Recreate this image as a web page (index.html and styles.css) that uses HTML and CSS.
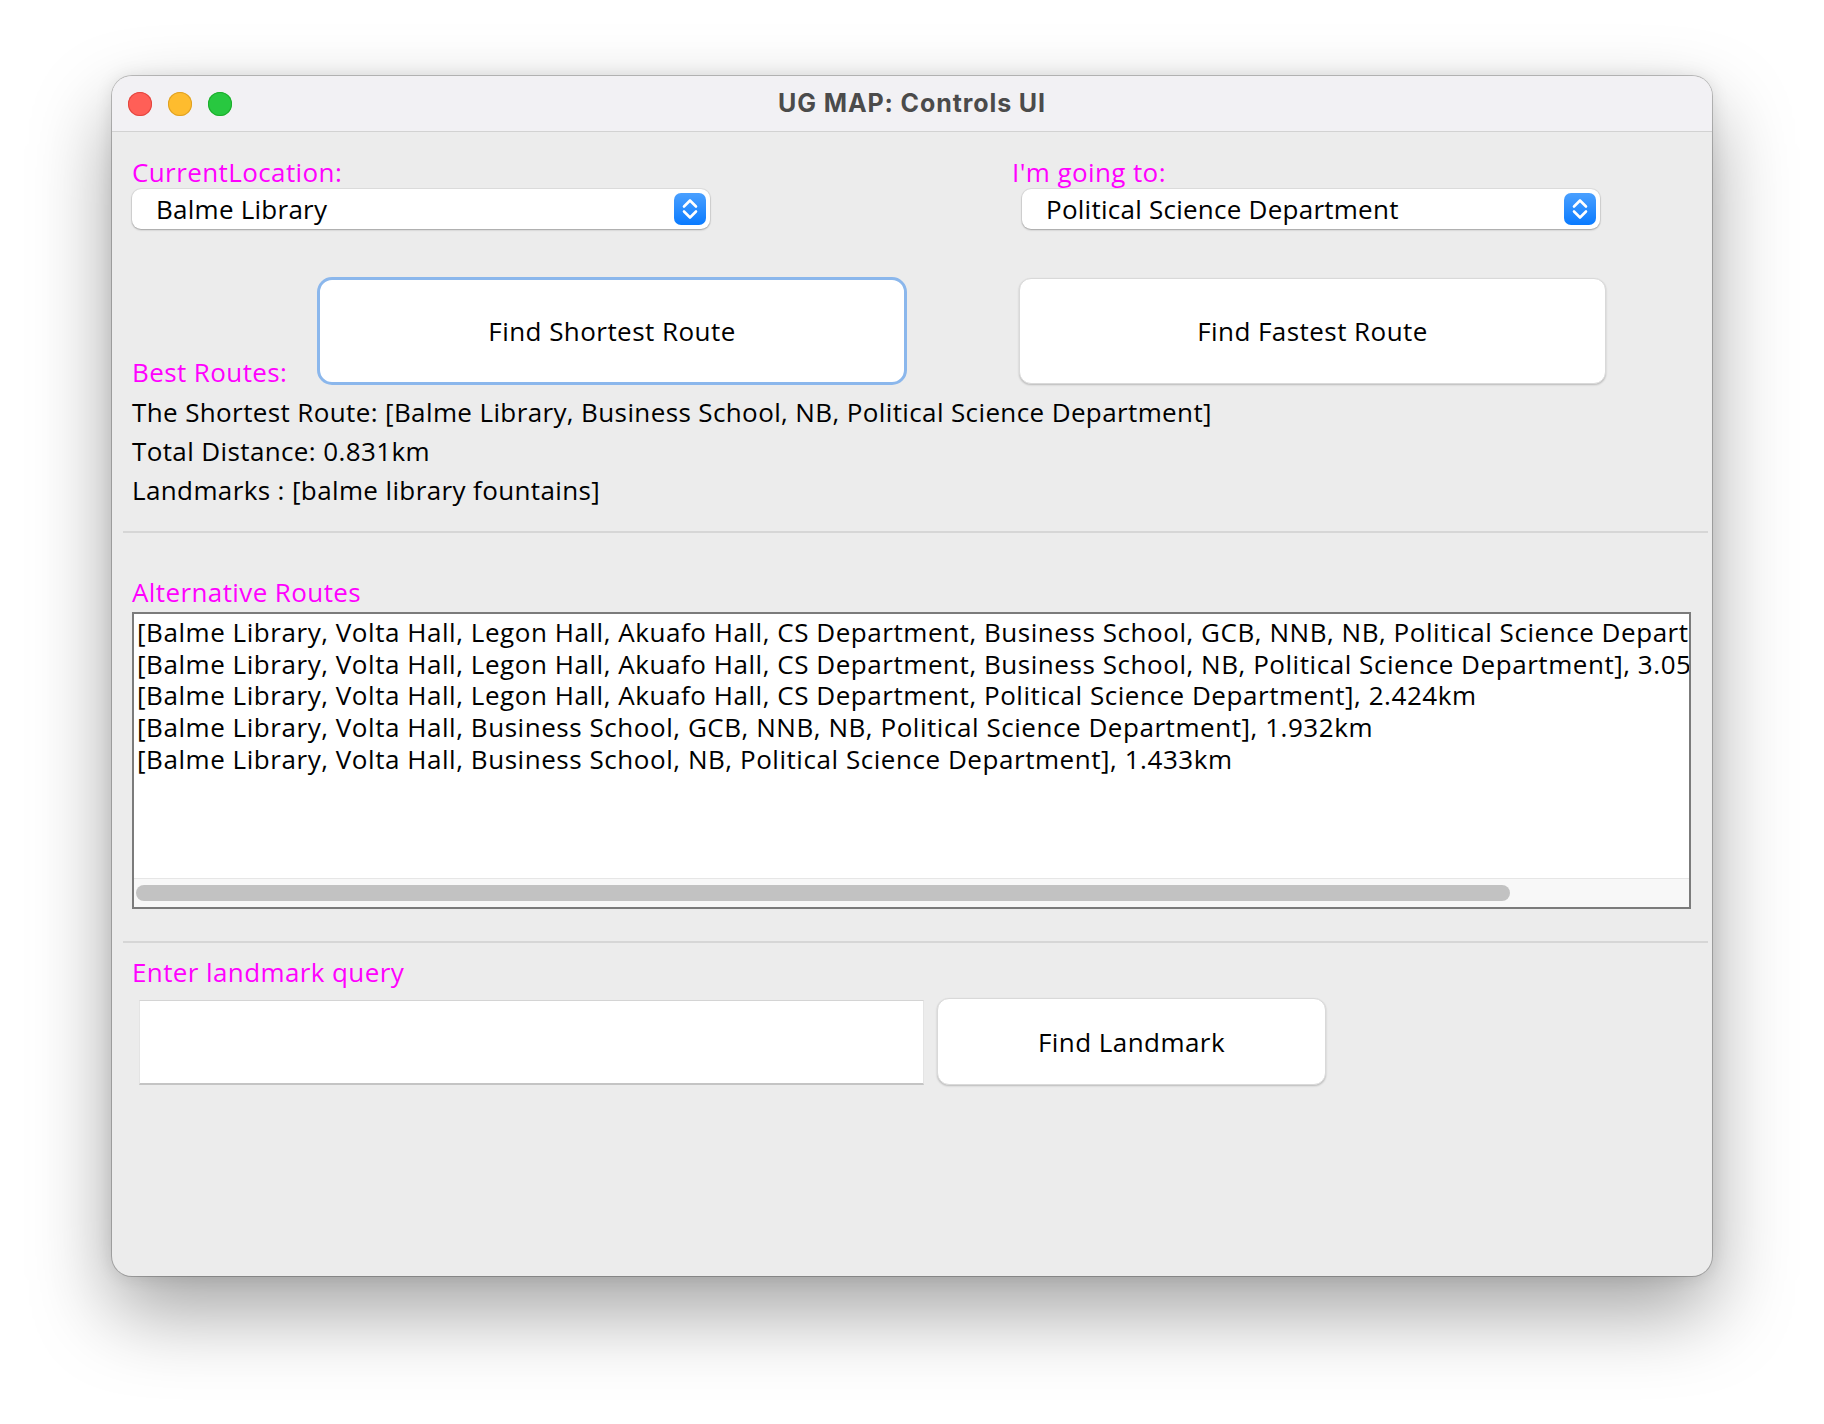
FILE: index.html
```
<!DOCTYPE html>
<html lang="en">
<head>
<meta charset="utf-8">
<title>UG MAP: Controls UI</title>
<link rel="stylesheet" href="styles.css">
</head>
<body>
<div class="screen">
  <div class="window">
    <div class="titlebar">
      <div class="lights">
        <span class="light red"></span>
        <span class="light yellow"></span>
        <span class="light green"></span>
      </div>
      <div class="title">UG MAP: Controls UI</div>
      <div class="titlebar-spacer"></div>
    </div>
    <div class="content">
      <div class="pickers">
        <div class="picker picker-from">
          <div class="label">CurrentLocation:</div>
          <div class="combo">
            <span class="combo-text">Balme Library</span>
            <svg class="stepper" width="32" height="32" viewBox="0 0 32 32">
              <defs>
                <linearGradient id="sg1" x1="0" y1="0" x2="0" y2="1">
                  <stop offset="0" stop-color="#4aa0ff"/>
                  <stop offset="1" stop-color="#0a7bff"/>
                </linearGradient>
              </defs>
              <rect x="0" y="0" width="32" height="32" rx="7" fill="url(#sg1)"/>
              <path d="M10 13.5 L16 7.5 L22 13.5" fill="none" stroke="#fff" stroke-width="2.6" stroke-linecap="round" stroke-linejoin="round"/>
              <path d="M10 18.5 L16 24.5 L22 18.5" fill="none" stroke="#fff" stroke-width="2.6" stroke-linecap="round" stroke-linejoin="round"/>
            </svg>
          </div>
        </div>
        <div class="picker picker-to">
          <div class="label">I'm going to:</div>
          <div class="combo">
            <span class="combo-text">Political Science Department</span>
            <svg class="stepper" width="32" height="32" viewBox="0 0 32 32">
              <defs>
                <linearGradient id="sg2" x1="0" y1="0" x2="0" y2="1">
                  <stop offset="0" stop-color="#4aa0ff"/>
                  <stop offset="1" stop-color="#0a7bff"/>
                </linearGradient>
              </defs>
              <rect x="0" y="0" width="32" height="32" rx="7" fill="url(#sg2)"/>
              <path d="M10 13.5 L16 7.5 L22 13.5" fill="none" stroke="#fff" stroke-width="2.6" stroke-linecap="round" stroke-linejoin="round"/>
              <path d="M10 18.5 L16 24.5 L22 18.5" fill="none" stroke="#fff" stroke-width="2.6" stroke-linecap="round" stroke-linejoin="round"/>
            </svg>
          </div>
        </div>
      </div>

      <div class="actions">
        <div class="label label-best">Best Routes:</div>
        <button class="btn btn-shortest">Find Shortest Route</button>
        <button class="btn btn-fastest">Find Fastest Route</button>
      </div>

      <div class="result">
        <div class="result-line">The Shortest Route: [Balme Library, Business School, NB, Political Science Department]</div>
        <div class="result-line">Total Distance: 0.831km</div>
        <div class="result-line">Landmarks : [balme library fountains]</div>
      </div>

      <div class="sep sep-1"></div>

      <div class="label label-alt">Alternative Routes</div>
      <div class="list">
        <div class="list-body">
          <div class="list-line">[Balme Library, Volta Hall, Legon Hall, Akuafo Hall, CS Department, Business School, GCB, NNB, NB, Political Science Department], 3.554km</div>
          <div class="list-line">[Balme Library, Volta Hall, Legon Hall, Akuafo Hall, CS Department, Business School, NB, Political Science Department], 3.055km</div>
          <div class="list-line">[Balme Library, Volta Hall, Legon Hall, Akuafo Hall, CS Department, Political Science Department], 2.424km</div>
          <div class="list-line">[Balme Library, Volta Hall, Business School, GCB, NNB, NB, Political Science Department], 1.932km</div>
          <div class="list-line">[Balme Library, Volta Hall, Business School, NB, Political Science Department], 1.433km</div>
        </div>
        <div class="hscroll"><div class="hscroll-thumb"></div></div>
      </div>

      <div class="sep sep-2"></div>

      <div class="label label-query">Enter landmark query</div>
      <div class="query-row">
        <div class="field"></div>
        <button class="btn btn-landmark">Find Landmark</button>
      </div>
    </div>
  </div>
</div>
</body>
</html>
```
FILE: styles.css
```
* {
  box-sizing: border-box;
}

html, body {
  margin: 0;
  padding: 0;
  background: #ffffff;
}

body {
  font-family: "Open Sans", "Liberation Sans", Arial, sans-serif;
  color: #000;
}

.screen {
  width: 1824px;
  height: 1424px;
  padding: 76px 0 0 112px;
}

.window {
  width: 1600px;
  height: 1200px;
  border-radius: 20px;
  background: #ececec;
  overflow: hidden;
  box-shadow:
    0 0 0 1px rgba(0, 0, 0, 0.22),
    0 0 18px rgba(0, 0, 0, 0.10),
    0 36px 80px rgba(0, 0, 0, 0.36);
}

/* Title bar */
.titlebar {
  height: 56px;
  background: #f2f1f4;
  border-bottom: 1px solid #d2d2d2;
  display: grid;
  grid-template-columns: 1fr auto 1fr;
  align-items: center;
}

.lights {
  display: flex;
  gap: 16px;
  padding-left: 16px;
}

.light {
  width: 24px;
  height: 24px;
  border-radius: 50%;
  display: block;
}

.light.red {
  background: #ff5f57;
  box-shadow: inset 0 0 0 1px #e2463f;
}

.light.yellow {
  background: #febc2e;
  box-shadow: inset 0 0 0 1px #dfa123;
}

.light.green {
  background: #28c840;
  box-shadow: inset 0 0 0 1px #1dad2b;
}

.title {
  font-family: Inter, "Liberation Sans", Arial, sans-serif;
  font-weight: 700;
  font-size: 25px;
  line-height: 55px;
  color: #4b4b4b;
  letter-spacing: 0.9px;
}

/* Content */
.content {
  padding: 25px 0 0 20px;
}

.label {
  color: #ff00ff;
  font-size: 26px;
  line-height: 30px;
  letter-spacing: 0.4px;
  white-space: nowrap;
}

.pickers {
  display: grid;
  grid-template-columns: 880px 1fr;
}

.combo {
  margin-top: 2px;
  width: 578px;
  height: 40px;
  background: #fff;
  border-radius: 9px;
  box-shadow: 0 0 0 1px rgba(0, 0, 0, 0.06), 0 1px 2px rgba(0, 0, 0, 0.28);
  display: flex;
  align-items: center;
  justify-content: space-between;
  padding: 0 4px 0 24px;
}

.picker-to .combo {
  margin-left: 10px;
}

.combo-text {
  font-size: 26px;
  line-height: 40px;
  letter-spacing: 0.25px;
  white-space: nowrap;
}

.stepper {
  display: block;
  flex: none;
}

/* Buttons row */
.actions {
  margin-top: 48px;
  height: 108px;
  display: flex;
  align-items: flex-end;
}

.label-best {
  width: 185px;
  margin-bottom: -2px;
}

.btn {
  font-family: "Open Sans", "Liberation Sans", Arial, sans-serif;
  font-size: 26px;
  letter-spacing: 0.45px;
  color: #000;
  background: #fff;
  border: 1px solid #d9d9d9;
  border-radius: 12px;
  box-shadow: 0 1px 2px rgba(0, 0, 0, 0.22);
  display: flex;
  align-items: center;
  justify-content: center;
  padding: 0;
  margin: 0;
}

.btn-shortest {
  width: 590px;
  height: 108px;
  border: 3px solid #8bb7ec;
  border-radius: 15px;
  box-shadow: none;
  align-self: stretch;
}

.btn-fastest {
  width: 587px;
  height: 106px;
  margin-left: 112px;
  align-self: center;
}

/* Result lines */
.result {
  margin-top: 8px;
}

.result-line {
  font-size: 26px;
  line-height: 39px;
  letter-spacing: 0.38px;
  white-space: nowrap;
}

/* Separators */
.sep {
  height: 2px;
  background: #d6d6d6;
  width: 1585px;
  margin-left: -9px;
}

.sep-1 {
  margin-top: 21px;
}

.label-alt {
  margin-top: 44px;
}

/* Alternative routes list */
.list {
  margin-top: 5px;
  width: 1559px;
  height: 297px;
  border: 2px solid #7b7b7b;
  background: #fff;
  display: flex;
  flex-direction: column;
}

.list-body {
  height: 264px;
  padding: 3px 0 0 3px;
  overflow: hidden;
}

.list-line {
  font-size: 26px;
  line-height: 31.67px;
  letter-spacing: 0.55px;
  white-space: nowrap;
}

.hscroll {
  flex: 1;
  background: #f8f8f8;
  border-top: 1px solid #e6e6e6;
  padding: 6px 0 0 2px;
}

.hscroll-thumb {
  width: 1374px;
  height: 16px;
  border-radius: 8px;
  background: #c2c2c2;
}

.sep-2 {
  margin-top: 32px;
}

/* Query */
.label-query {
  margin-top: 14px;
}

.query-row {
  margin-top: 11px;
  display: flex;
  align-items: flex-end;
  gap: 13px;
}

.field {
  margin-left: 7px;
  width: 785px;
  height: 85px;
  background: #fff;
  border-top: 1px solid #d4d4d4;
  border-left: 1px solid #e4e4e4;
  border-right: 1px solid #e4e4e4;
  border-bottom: 2px solid #c4c4c4;
}

.btn-landmark {
  width: 389px;
  height: 87px;
}
```
